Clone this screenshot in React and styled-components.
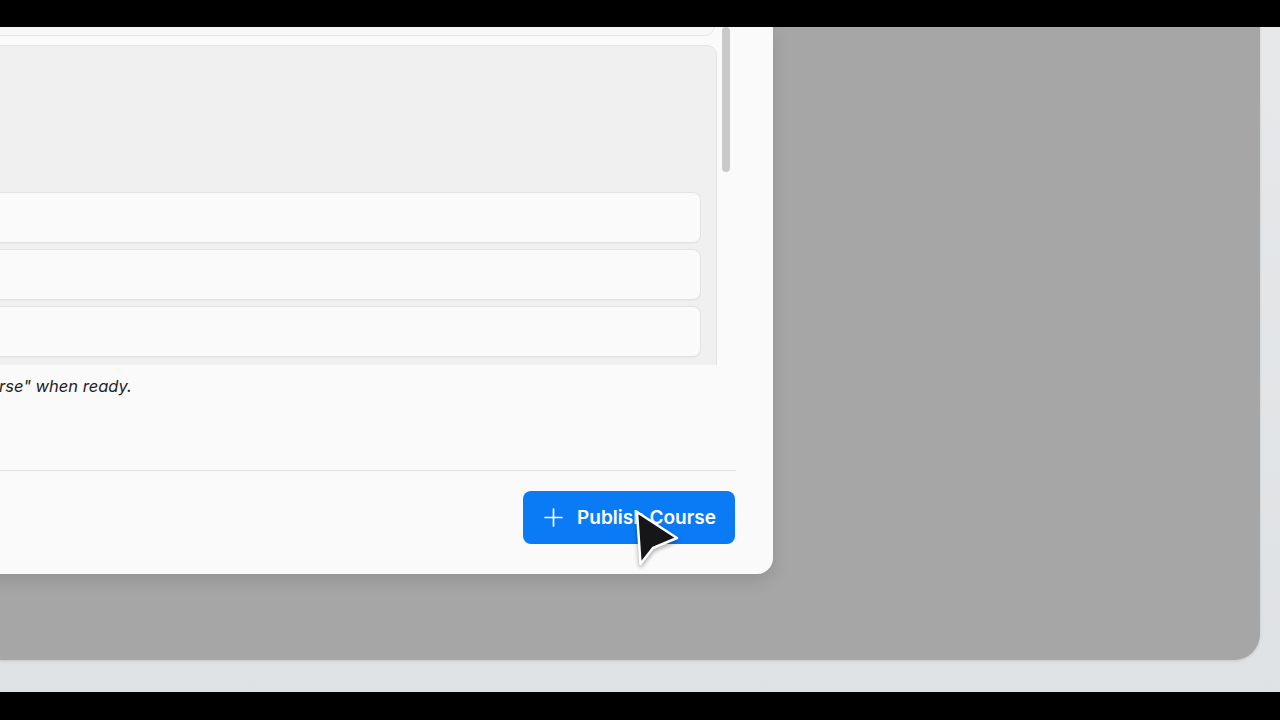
import React from 'react';
import styled, { createGlobalStyle } from 'styled-components';
import { Plus } from 'lucide-react';

const GlobalStyle = createGlobalStyle`
  html, body {
    margin: 0;
    padding: 0;
    background: #000;
    overflow: hidden;
  }

  * {
    box-sizing: border-box;
  }
`;

const Frame = styled.div`
  width: 1280px;
  height: 720px;
  display: flex;
  flex-direction: column;
  background: #000;
`;

const Letterbox = styled.div`
  height: ${({ size }) => size}px;
  flex-shrink: 0;
  background: #000;
`;

const Stage = styled.div`
  flex: 1;
  display: flex;
  padding: 0 20px 32px 0;
  background: linear-gradient(180deg, #e6e8ea 0%, #dfe2e4 100%);
  overflow: hidden;
`;

const Window = styled.div`
  flex: 1;
  display: flex;
  align-items: flex-start;
  background: #a6a6a6;
  border-bottom-right-radius: 26px;
  box-shadow: 0 1px 3px rgba(0, 0, 0, 0.12);
  overflow: hidden;
`;

// the modal is wider than the crop, only its right part is on screen
const MODAL_WIDTH = 1195;

const Modal = styled.div`
  width: ${MODAL_WIDTH}px;
  margin-left: ${773 - MODAL_WIDTH}px;
  height: 547px;
  flex-shrink: 0;
  display: flex;
  flex-direction: column;
  padding: 0 37px 30px 24px;
  background: #fafafa;
  border-bottom-right-radius: 16px;
  box-shadow: 0 6px 18px rgba(0, 0, 0, 0.12);
  font-family: Inter, 'Noto Sans', sans-serif;
`;

const ScrollArea = styled.div`
  height: 338px;
  display: flex;
  flex-shrink: 0;
`;

const ScrollContent = styled.div`
  flex: 1;
  overflow: hidden;
`;

const ScrollInner = styled.div`
  display: flex;
  flex-direction: column;
  gap: 9px;
  margin-top: -91px;
`;

const Gutter = styled.div`
  width: 19px;
  padding-left: 5px;
`;

const Thumb = styled.div`
  width: 8px;
  height: 145px;
  border-radius: 4px;
  background: #c9c9c9;
`;

const SectionCard = styled.div`
  height: 100px;
  margin-right: 2px;
  background: #f8f8f8;
  border: 1px solid #e6e6e6;
  border-radius: 10px;
`;

const Panel = styled.div`
  display: flex;
  flex-direction: column;
  gap: 6px;
  padding: 0 15px 20px 16px;
  background: #f0f0f0;
  border: 1px solid #e3e3e3;
  border-radius: 10px;
`;

const PanelBody = styled.div`
  height: 140px;
`;

const Field = styled.div`
  height: 51px;
  background: #fafafa;
  border: 1px solid #e2e2e2;
  border-radius: 8px;
  box-shadow: 0 1px 1px rgba(0, 0, 0, 0.03);
`;

const HintArea = styled.div`
  flex: 1;
  padding-top: 11px;
`;

const Hint = styled.p`
  margin: 0;
  font-size: 16.5px;
  line-height: 20px;
  font-style: italic;
  font-weight: 400;
  color: #222;
  white-space: nowrap;
`;

const Divider = styled.div`
  height: 1px;
  flex-shrink: 0;
  background: #e2e2e2;
`;

const Footer = styled.div`
  display: flex;
  justify-content: flex-end;
  padding: 20px 1px 0 0;
`;

const ButtonWrap = styled.div`
  position: relative;
`;

const PrimaryButton = styled.button`
  height: 53px;
  width: 212px;
  display: flex;
  align-items: center;
  gap: 9px;
  padding: 0 0 0 16px;
  border: none;
  border-radius: 8px;
  background: #0b7bf5;
  color: #fff;
  font-family: Inter, 'Noto Sans', sans-serif;
  font-size: 19px;
  font-weight: 600;
  cursor: pointer;
`;

const Pointer = styled.svg`
  position: absolute;
  left: 110px;
  top: 18px;
  filter: drop-shadow(0 2px 2px rgba(0, 0, 0, 0.35));
`;

const Cursor = () => (
  <Pointer width="48" height="60" viewBox="0 0 48 60">
    <path
      d="M4 3 L7.5 55 L20 39 L44 29 Z"
      fill="#161618"
      stroke="#fff"
      strokeWidth="2.5"
      strokeLinejoin="round"
    />
  </Pointer>
);

const App = () => (
  <>
    <GlobalStyle />
    <Frame>
      <Letterbox size={27} />
      <Stage>
        <Window>
          <Modal>
            <ScrollArea>
              <ScrollContent>
                <ScrollInner>
                  <SectionCard />
                  <Panel>
                    <PanelBody />
                    <Field />
                    <Field />
                    <Field />
                  </Panel>
                </ScrollInner>
              </ScrollContent>
              <Gutter>
                <Thumb />
              </Gutter>
            </ScrollArea>
            <HintArea>
              <Hint>
                Review each lesson above, then click "Publish Course" when ready.
              </Hint>
            </HintArea>
            <Divider />
            <Footer>
              <ButtonWrap>
                <PrimaryButton>
                  <Plus size={29} strokeWidth={1.4} />
                  Publish Course
                </PrimaryButton>
                <Cursor />
              </ButtonWrap>
            </Footer>
          </Modal>
        </Window>
      </Stage>
      <Letterbox size={28} />
    </Frame>
  </>
);

export default App;
